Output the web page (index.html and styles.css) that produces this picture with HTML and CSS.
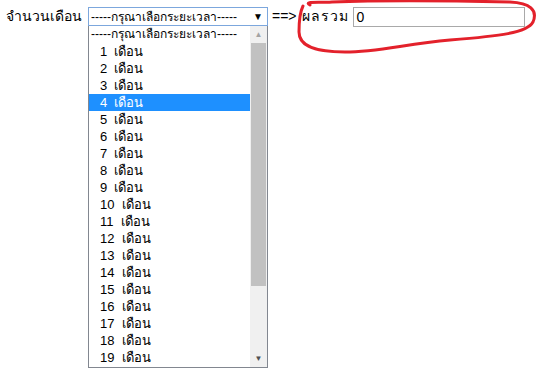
FILE: index.html
```html
<!DOCTYPE html>
<html lang="th">
<head>
    <meta charset="UTF-8">
    <title>จำนวนเดือน</title>
    <link rel="stylesheet" href="styles.css">
</head>
<body>
    <div class="row">
        <span class="label">จำนวนเดือน</span>
        <div class="picker">
            <div class="select">
                <span>-----กรุณาเลือกระยะเวลา-----</span>
                <span class="caret">▼</span>
            </div>
            <div class="list">
                <ul class="options">
                    <li class="head">-----กรุณาเลือกระยะเวลา-----</li>
                    <li>1 &nbsp;เดือน</li>
                    <li>2 &nbsp;เดือน</li>
                    <li>3 &nbsp;เดือน</li>
                    <li class="picked">4 &nbsp;เดือน</li>
                    <li>5 &nbsp;เดือน</li>
                    <li>6 &nbsp;เดือน</li>
                    <li>7 &nbsp;เดือน</li>
                    <li>8 &nbsp;เดือน</li>
                    <li>9 &nbsp;เดือน</li>
                    <li>10 &nbsp;เดือน</li>
                    <li>11 &nbsp;เดือน</li>
                    <li>12 &nbsp;เดือน</li>
                    <li>13 &nbsp;เดือน</li>
                    <li>14 &nbsp;เดือน</li>
                    <li>15 &nbsp;เดือน</li>
                    <li>16 &nbsp;เดือน</li>
                    <li>17 &nbsp;เดือน</li>
                    <li>18 &nbsp;เดือน</li>
                    <li>19 &nbsp;เดือน</li>
                </ul>
                <div class="scrollbar">
                    <span class="arrow up">▲</span>
                    <div class="thumb"></div>
                    <span class="arrow down">▼</span>
                </div>
            </div>
        </div>
        <span class="arrow-text">==&gt;</span>
        <span class="label sum">ผลรวม</span>
        <div class="total">0</div>
    </div>

    <!-- hand drawn red ring -->
    <svg class="ring" width="536" height="60" viewBox="0 0 536 60">
        <path d="M310 5 C303 1 318 3 332 2 C385 0 465 1 510 2 C530 3 538 10 533 22 C527 33 500 36 450 40 C405 44 378 52 345 52 C310 52 299 44 299 32 C299 20 300 12 303 6"
              fill="none" stroke="#e3212b" stroke-width="3" stroke-linecap="round"/>
    </svg>
</body>
</html>
```

FILE: styles.css
```css
body {
    margin: 0;
    font-family: "Liberation Sans", "DejaVu Sans", sans-serif;
    font-size: 14px;
    color: #000;
    background: #fff;
}
.row {
    display: flex;
    align-items: flex-start;
    padding: 7px 0 0 6px;
}
.label {
    line-height: 19px;
    margin-right: 6px;
}
.label.sum {
    letter-spacing: 1px;
    margin-right: 4px;
}
.picker {
    width: 180px;
    margin-right: 4px;
}
.select {
    height: 17px;
    border: 1px solid #7ca7dd;
    display: flex;
    justify-content: space-between;
    align-items: center;
    padding: 0 4px 0 2px;
    font-size: 12px;
}
.caret {
    font-size: 10px;
}
.list {
    display: flex;
    height: 341px;
    border: 1px solid #828790;
    border-top: none;
    overflow: hidden;
}
.options {
    list-style: none;
    margin: 0;
    padding: 0;
    flex: 1;
    font-size: 13px;
}
.options li {
    height: 17px;
    line-height: 17px;
    padding-left: 11px;
}
.options li.head {
    padding-left: 2px;
    font-size: 12px;
}
.options li.picked {
    background: #1e90ff;
    color: #fff;
}
.scrollbar {
    width: 17px;
    background: #f0f0f0;
    display: flex;
    flex-direction: column;
    align-items: center;
}
.arrow {
    height: 17px;
    line-height: 17px;
    font-size: 8px;
}
.arrow.up {
    color: #a3a3a3;
}
.arrow.down {
    color: #505050;
    margin-top: auto;
}
.thumb {
    width: 15px;
    height: 243px;
    background: #c1c1c1;
}
.arrow-text {
    line-height: 19px;
    margin-right: 5px;
}
.total {
    width: 167px;
    height: 18px;
    line-height: 18px;
    border: 1px solid #a9a9a9;
    padding-left: 3px;
    font-size: 14px;
}
.ring {
    position: absolute;
    left: 0;
    top: 0;
}
```
